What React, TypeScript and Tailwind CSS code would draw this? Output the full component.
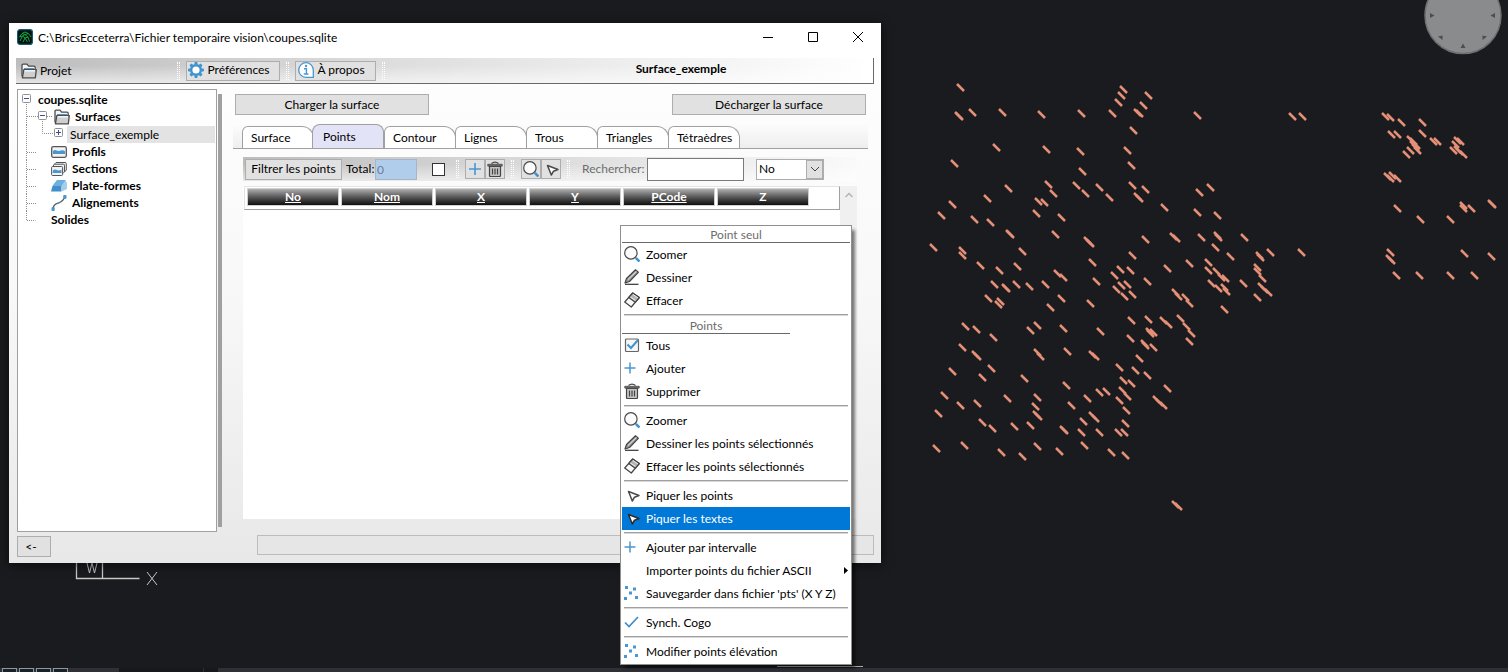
import type { ReactNode } from 'react';

const POINTS: number[][] = [
  [960, 87], [958, 115], [959, 116], [972, 112], [1002, 112], [1041, 114], [1081, 113], [996, 147], [1046, 149], [1080, 151],
  [954, 163], [1082, 171], [1008, 188], [1048, 184], [1053, 193], [1076, 185], [1085, 193], [1099, 187], [1109, 197],
  [987, 198], [1038, 201], [1044, 202], [1036, 213], [952, 204], [941, 215], [974, 219], [990, 222], [1061, 217],
  [1009, 233], [1010, 234], [1055, 234], [1087, 240], [1089, 242], [1090, 243], [933, 247], [962, 250], [962, 255], [1022, 251],
  [980, 265], [999, 270], [1017, 266], [1092, 262], [1057, 273], [1063, 277], [1096, 281], [994, 284], [1005, 287],
  [1006, 288], [1016, 284], [1029, 286], [1045, 284], [1061, 298], [988, 298], [1000, 301], [998, 304], [1050, 307],
  [1090, 303], [965, 326], [976, 329], [993, 337], [1030, 330], [1037, 325], [1063, 328], [1100, 331], [962, 347],
  [975, 354], [977, 356], [1037, 352], [1040, 356], [1067, 351], [1092, 354], [1095, 356], [991, 368], [952, 371], [982, 377],
  [1024, 378], [1066, 385], [944, 395], [1007, 398], [1037, 397], [1035, 406], [1036, 414], [1038, 416], [960, 405],
  [977, 403], [938, 413], [982, 422], [992, 428], [1014, 426], [1030, 425], [1063, 429], [1064, 430], [1071, 405],
  [1087, 398], [1099, 392], [1106, 391], [1092, 415], [1095, 418], [1083, 421], [1081, 432], [1099, 432], [936, 448],
  [964, 445], [1001, 452], [1022, 456], [1037, 446], [1059, 451], [1084, 445], [1123, 89], [1121, 95], [1118, 102],
  [1112, 113], [1148, 95], [1143, 105], [1137, 112], [1139, 113], [1133, 130], [1127, 150], [1131, 165], [1132, 185],
  [1145, 189], [1137, 196], [1139, 198], [1164, 207], [1199, 192], [1210, 187], [1197, 212], [1217, 215], [1197, 115],
  [1292, 116], [1302, 116], [1145, 239], [1173, 236], [1176, 238], [1201, 237], [1217, 235], [1218, 237], [1244, 237], [1215, 247],
  [1230, 256], [1259, 255], [1260, 257], [1270, 252], [1301, 252], [1132, 255], [1120, 269], [1130, 270], [1114, 275],
  [1167, 268], [1189, 263], [1208, 262], [1208, 270], [1216, 271], [1221, 277], [1225, 278], [1211, 283], [1218, 288],
  [1224, 287], [1226, 291], [1243, 283], [1257, 267], [1257, 271], [1262, 278], [1261, 286], [1264, 289], [1268, 292],
  [1257, 297], [1121, 285], [1127, 284], [1116, 289], [1124, 296], [1132, 294], [1147, 281], [1175, 292], [1178, 296],
  [1185, 297], [1189, 303], [1224, 309], [1131, 320], [1148, 319], [1163, 320], [1168, 324], [1180, 318], [1186, 326],
  [1191, 333], [1189, 341], [1149, 331], [1150, 333], [1153, 332], [1144, 343], [1145, 345], [1153, 347], [1130, 338],
  [1139, 358], [1119, 367], [1135, 370], [1147, 375], [1123, 380], [1131, 383], [1122, 390], [1127, 396], [1119, 400],
  [1126, 410], [1167, 388], [1156, 399], [1159, 402], [1163, 405], [1125, 423], [1118, 432], [1124, 432], [1111, 452],
  [1125, 455], [1175, 504], [1178, 506], [1385, 116], [1390, 117], [1401, 122], [1391, 134], [1397, 134], [1422, 122],
  [1422, 133], [1410, 139], [1413, 141], [1413, 144], [1416, 145], [1417, 150], [1415, 147], [1410, 150], [1406, 154],
  [1433, 141], [1437, 141], [1457, 140], [1460, 141], [1455, 144], [1453, 150], [1457, 149], [1459, 151], [1463, 154],
  [1387, 176], [1390, 178], [1392, 175], [1397, 178], [1397, 208], [1420, 219], [1450, 219], [1463, 205], [1463, 208],
  [1471, 208], [1491, 203], [1492, 204], [1390, 252], [1389, 258], [1391, 260], [1464, 253], [1491, 256], [1396, 275],
  [1419, 275], [1450, 275], [1474, 275],
];

/* ---------- icons ---------- */

function Ic({ children, className = 'h-4 w-4' }: { children: ReactNode; className?: string }) {
  return (
    <svg viewBox="0 0 16 16" className={`shrink-0 ${className}`} fill="none" aria-hidden="true">
      {children}
    </svg>
  );
}

const FolderIcon = () => (
  <Ic>
    <path d="M1 13.500V2.500Q1 1.200 2.200 1.200h3.800l1.600 2h5.400q1.200 0 1.200 1.200V7" fill="#f4f4f4" stroke="#4c4c4c" strokeWidth="1.300" />
    <path d="M3 5h10v2H3z" fill="#4a97cf" />
    <path d="M2.800 6.600h12.500l-1 8.200H1.400z" fill="#cfcfcf" stroke="#4c4c4c" strokeWidth="1.300" strokeLinejoin="round" />
    <path d="M3.600 7.800h10.400" stroke="#fff" strokeWidth="1.300" />
  </Ic>
);

const GearIcon = () => (
  <Ic>
    <circle cx="8" cy="8" r="4.800" fill="#fff" stroke="#3f93cf" strokeWidth="2.400" />
    {[0, 45, 90, 135, 180, 225, 270, 315].map((a) => (
      <path key={a} d="M6.200 2.600 6.800 .1h2.400l.6 2.500z" fill="#3f93cf" transform={`rotate(${a} 8 8)`} />
    ))}
  </Ic>
);

const InfoIcon = () => (
  <Ic>
    <path d="M8 .7a7.3 7.3 0 1 0 0 14.6h7.3V8A7.3 7.3 0 0 0 8 .7z" fill="#fff" stroke="#4a97cf" strokeWidth="1.3" />
    <circle cx="8" cy="4" r="1.2" fill="#4a97cf" />
    <path d="M6 6.800h2.400v5M5.800 12h4.600" stroke="#4a97cf" strokeWidth="1.4" />
  </Ic>
);

const ProfileIcon = () => (
  <Ic>
    <rect x=".7" y="2.700" width="14.600" height="10.600" rx="1.500" fill="#f2f2f2" stroke="#555" strokeWidth="1.300" />
    <path d="M2 7q1.500-1.500 3.500-.6T10 6.500t4 .7V10H2z" fill="#4a97cf" />
  </Ic>
);

const SectionIcon = () => (
  <Ic>
    <path d="M4 4.500V2.500l1-1h9q1.300 0 1.300 1.300V9l-1.800 2" fill="#f2f2f2" stroke="#555" />
    <path d="M2.500 6V4l.8-.8h9.200q1 0 1 1V11l-1.300 1" fill="#f2f2f2" stroke="#555" />
    <rect x=".6" y="5.500" width="11" height="9" rx="1" fill="#f2f2f2" stroke="#555" />
    <path d="M1.800 9.500q2-1.500 4-.5t4.700-.3v3.300H1.800z" fill="#4a97cf" />
  </Ic>
);

const PlatformIcon = () => (
  <Ic>
    <path d="M0 13.500 1.500 8 6 2.300h8.500L10.500 8v5.500z" fill="#3f8fca" />
    <path d="M1.800 8 6 2.300h8.500L10.500 8z" fill="#6bb0e0" />
    <path d="M10.500 13.500V8l4-5.700L16 5v6z" fill="#a4cdea" />
  </Ic>
);

const AlignIcon = () => (
  <Ic>
    <path d="M2 14.500C2 8 7 8.500 8 7.800 12 6 13.500 4 14 1" stroke="#555" strokeWidth="1.300" />
    <path d="M1 12.500h2.200v3H1zM12.800.3H15v3h-2.200zM6.300 8.800l4-2.300" fill="#4a97cf" stroke="#4a97cf" strokeWidth="1" />
  </Ic>
);

const SearchIcon = () => (
  <Ic>
    <circle cx="6.900" cy="6.900" r="6.200" fill="#fbfbfb" stroke="#4a4a4a" strokeWidth="1.200" />
    <path d="m11.800 11.800 3.700 3.700" stroke="#3f93cf" strokeWidth="2.600" />
  </Ic>
);

const PencilIcon = () => (
  <Ic>
    <path d="M1 14 2.500 9.500 11.500.8l2.800 2.500L5.500 12.500z" fill="#9a9a9a" stroke="#444" strokeWidth="1.200" strokeLinejoin="round" />
    <path d="M4 10.500 12.500 2.300" stroke="#eee" />
    <path d="M1 15.300h13.500" stroke="#333" strokeWidth="1.200" />
  </Ic>
);

const EraserIcon = () => (
  <Ic>
    <path d="M.7 10 8.700 1l6.600 4.500-8 9.500z" fill="#fafafa" stroke="#444" strokeWidth="1.200" strokeLinejoin="round" />
    <path d="M4.700 5.500 8.700 1l6.600 4.500-4 4.700z" fill="#b4b4b4" stroke="#444" strokeWidth="1.200" strokeLinejoin="round" />
    <path d="m6.500 5 5 3.600M9 2.500l5 3.500" stroke="#ececec" />
  </Ic>
);

const CheckBoxIcon = () => (
  <Ic>
    <rect x="1.500" y="2" width="13" height="12.500" rx="1" fill="#f6f6f6" stroke="#666" strokeWidth="1.200" />
    <path d="M3.500 7.500 7 11l7-8" stroke="#3f93cf" strokeWidth="2" />
  </Ic>
);

const PlusIcon = () => (
  <Ic>
    <path d="M6 2.500v11M.5 8h11" stroke="#4a97cf" strokeWidth="1.500" />
  </Ic>
);

const PlusCenteredIcon = () => (
  <Ic>
    <path d="M8 2v12M2 8h12" stroke="#4a97cf" strokeWidth="1.600" />
  </Ic>
);

const TrashIcon = () => (
  <Ic>
    <path d="M2.500 5.500h11v9q0 1-1 1h-9q-1 0-1-1z" fill="#c4c4c4" stroke="#444" strokeWidth="1.200" />
    <path d="M.8 3.300h14.400v1.800H.8z" fill="#777" stroke="#444" strokeWidth=".8" />
    <path d="M4.500 2.500Q8-.3 11.500 2.500" stroke="#444" strokeWidth="1.400" />
    <path d="M5.500 7.500v6M8 7.500v6M10.500 7.500v6" stroke="#444" strokeWidth="1.200" />
  </Ic>
);

const CursorIcon = ({ dark = false }: { dark?: boolean }) => (
  <Ic>
    <path d="M4.500 4.500 15 8.500l-4.500 1.700L8.300 14z" fill="#fff" stroke={dark ? '#2b2b2b' : '#4a4a4a'} strokeWidth="1.500" strokeLinejoin="round" />
  </Ic>
);

const DotsIcon = () => (
  <Ic>
    <path d="M1 1h3v3H1zM9 2.500h3v3H9zM5 6.500h3v3H5zM0 12h3v3H0zM11 11h3v3h-3z" fill="#4a97cf" />
  </Ic>
);

const CheckIcon = () => (
  <Ic>
    <path d="M1 8.500 5 12.500 14 3" stroke="#3f8cc9" strokeWidth="1.700" />
  </Ic>
);

const AppIcon = () => (
  <Ic>
    <rect x=".6" y=".6" width="14.800" height="14.800" rx="2.500" fill="#04120c" stroke="#1b5878" strokeWidth="1.200" />
    <path d="M2.500 8 5 4.500 8 3l3.500 1.500L14 8M3 12l2.500-5L8 5.500 11 8l1.500 4.500M5.500 7 8 9l3-1M6 13l2-4 2.500 4M2.500 8l3-1M5 4.500l3 1 3.500-1" stroke="#17a046" strokeWidth="1" />
  </Ic>
);

/* ---------- small building blocks ---------- */

const Grip = () => <span className="h-[18px] w-[3px] shrink-0 border-x border-dotted border-white" />;

function FlatButton({ children, className = '' }: { children: ReactNode; className?: string }) {
  return (
    <button type="button" className={`flex shrink-0 items-center justify-center border border-[#adadad] bg-[#e1e1e1] ${className}`}>
      {children}
    </button>
  );
}

/* ---------- drawing area behind the window ---------- */

function DrawingCanvas() {
  return (
    <svg className="absolute inset-0 h-full w-full" aria-hidden="true">
      <g stroke="#e58f78" strokeWidth="2.500">
        {POINTS.map(([x, y], i) => (
          <path key={i} d={`M${x - 3} ${y - 3}l7 7`} />
        ))}
      </g>
      <circle cx="1463" cy="15.500" r="38" fill="#8a8b8c" stroke="#6f7072" strokeWidth="1.500" />
      <g fill="#4c4d4f">
        <path d="M1430 13v5l4.500-2.500zM1495 13v5l-4.500-2.500zM1460.500 48h5l-2.500-4.500zM1438 36.500l4.500-1v4.500zM1487 36.500l-4.500-1v4.500z" />
      </g>
      <g stroke="#c8c8c8" fill="none">
        <path d="M76.500 560v18.500h63M102.500 560v18" strokeWidth="1.300" />
        <path d="m147 572 10 13m0-13-10 13" />
        <path d="m86.500 561 3 12 2.500-10 2.500 10 3-12" />
      </g>
      <path d="M777 666.500h86" stroke="#a9aba6" />
    </svg>
  );
}

function StatusStrip() {
  return (
    <div className="relative flex h-1 w-full bg-[#2f3036]">
      {[0, 1, 2, 3].map((n) => (
        <span key={n} className="ml-[2px] h-1 w-[15px] border-x border-t border-[#8b97a3] bg-[#1b2026]" />
      ))}
      <span className="ml-[51px] h-1 w-[84px] bg-[#17181c]" />
      <span className="ml-px h-1 w-[14px] bg-[#17181c]" />
    </div>
  );
}

/* ---------- tree ---------- */

type Node = { label: string; lines: string; width: number; boxes?: [number, boolean][]; icon?: ReactNode; bold?: boolean; selected?: boolean };

const TREE: Node[] = [
  { label: 'coupes.sqlite', lines: 'M8.500 9v9', width: 20, boxes: [[4, false]], bold: true },
  { label: 'Surfaces', lines: 'M8.500 0v18M9 8.500h11M24.500 9v9M29 8.500h6', width: 36, boxes: [[20, false]], icon: <FolderIcon />, bold: true },
  { label: 'Surface_exemple', lines: 'M8.500 0v18M24.500 0v8.500h12', width: 49, boxes: [[36, true]], selected: true },
  { label: 'Profils', lines: 'M8.500 0v18M9 9.500h9', width: 33, icon: <ProfileIcon />, bold: true },
  { label: 'Sections', lines: 'M8.500 0v18M9 9.500h9', width: 33, icon: <SectionIcon />, bold: true },
  { label: 'Plate-formes', lines: 'M8.500 0v18M9 9.500h9', width: 33, icon: <PlatformIcon />, bold: true },
  { label: 'Alignements', lines: 'M8.500 0v18M9 9.500h9', width: 33, icon: <AlignIcon />, bold: true },
  { label: 'Solides', lines: 'M8.500 0v9.500h9', width: 33, bold: true },
];

function Tree() {
  return (
    <ul className="w-[200px] shrink-0 border border-[#a0a0a0] bg-white pt-px pr-px">
      {TREE.map((n) => (
        <li key={n.label} className={n.selected ? 'flex h-[18px] items-end' : 'flex h-[17px] items-center'}>
          <svg style={{ width: n.width }} className="h-full shrink-0 self-stretch" aria-hidden="true">
            <path d={n.lines} stroke="#909090" strokeDasharray="1 1" fill="none" />
            {n.boxes?.map(([x, plus]) => (
              <g key={x}>
                <rect x={x + 0.5} y="3.500" width="8" height="8" rx="1" fill="#fdfdfd" stroke="#919191" />
                <path d={plus ? `M${x + 2} 7.500h5M${x + 4.5} 5v5` : `M${x + 2} 7.500h5`} stroke="#3a4f9a" />
              </g>
            ))}
          </svg>
          {n.icon}
          <span
            className={
              n.selected
                ? 'flex h-[17px] flex-1 items-center bg-[#e3e3e3] pl-[3px]'
                : n.bold && n.icon
                  ? 'pl-[5px] font-bold'
                  : 'font-bold'
            }
          >
            {n.label}
          </span>
        </li>
      ))}
    </ul>
  );
}

/* ---------- surface panel ---------- */

const TABS = ['Surface', 'Points', 'Contour', 'Lignes', 'Trous', 'Triangles', 'Tétraèdres'];
const COLUMNS = ['No', 'Nom', 'X', 'Y', 'PCode', 'Z'];

function Tabs() {
  return (
    <div role="tablist" className="mt-[9px] flex h-[25px] items-end border-b border-[#a0a0a0] bg-linear-to-b from-transparent to-[#eeeeee] pl-[9px]">
      {TABS.map((t) =>
        t === 'Points' ? (
          <button key={t} role="tab" aria-selected="true" type="button" className="-ml-px h-6 w-[72px] shrink-0 rounded-t-lg border border-b-0 border-[#a0a0a0] bg-[#e3e3f7] pl-[10px] text-left">
            {t}
          </button>
        ) : (
          <button key={t} role="tab" aria-selected="false" type="button" className="-mr-px h-[22px] w-[72px] shrink-0 rounded-tl-md rounded-tr-xl border border-b-0 border-[#a0a0a0] bg-white pl-2 text-left">
            {t}
          </button>
        ),
      )}
    </div>
  );
}

function FilterBar() {
  return (
    <div className="flex h-6 items-center bg-[linear-gradient(to_bottom,transparent_30%,rgba(255,255,255,0.600)),linear-gradient(to_right,#bdbdbd,#fafafa)] pl-[2px]">
      <FlatButton className="h-[21px] w-[97px]">Filtrer les points</FlatButton>
      <label htmlFor="total" className="w-[33px] shrink-0 pl-1">Total:</label>
      <input id="total" readOnly value="0" className="h-[21px] w-[42px] shrink-0 border border-[#a5b6c9] bg-[#b1cdec] pl-px text-[#6d7f93]" />
      <input type="checkbox" aria-label="Tous les points" className="mr-[11px] ml-[15px] h-[13px] w-[13px] shrink-0 appearance-none border border-[#333] bg-white" />
      <Grip />
      <FlatButton className="ml-[6px] h-5 w-5"><PlusCenteredIcon /></FlatButton>
      <FlatButton className="mr-[6px] h-5 w-5"><TrashIcon /></FlatButton>
      <Grip />
      <FlatButton className="ml-[7px] h-5 w-5"><SearchIcon /></FlatButton>
      <FlatButton className="mr-[6px] h-5 w-5"><CursorIcon /></FlatButton>
      <Grip />
      <label htmlFor="search" className="w-[77px] shrink-0 pl-3 text-[#6d6d6d]">Rechercher:</label>
      <input id="search" className="h-[23px] w-[97px] shrink-0 border border-[#7a7a7a] bg-white px-1" />
      <div className="relative ml-3 h-[21px] w-[68px] shrink-0 border border-[#adadad] bg-white">
        <select aria-label="Champ de recherche" className="h-full w-full appearance-none bg-transparent pl-[2px] leading-none">
          <option>No</option>
        </select>
        <span className="pointer-events-none absolute top-0 right-0 flex h-full w-[17px] items-center justify-center border border-[#adadad] bg-[#e1e1e1]">
          <svg viewBox="0 0 10 6" className="h-[6px] w-[10px]" fill="none" aria-hidden="true"><path d="m1 1 4 4 4-4" stroke="#444" /></svg>
        </span>
      </div>
    </div>
  );
}

function PointsPage() {
  return (
    <div className="flex flex-1 flex-col pt-2 pr-[11px] pb-[13px] pl-[10px]">
      <FilterBar />
      <div className="mt-[5px] flex flex-1 bg-white">
        <div className="flex-1">
          <div className="ml-px h-6 border border-[#a0a0a0] border-t-[#e3e3e3] border-l-[#e3e3e3] pt-px pl-px">
            <table className="w-[564px] table-fixed border-collapse">
              <thead>
                <tr>
                  {COLUMNS.map((c) => (
                    <th key={c} className="p-0 px-px">
                      <div className={`h-[18px] border border-[#d0d0d0] bg-linear-to-b from-[#b0b0b0] via-[#585858] to-[#101010] leading-4 font-bold text-white ${c === 'Z' ? '' : 'underline'}`}>{c}</div>
                    </th>
                  ))}
                </tr>
              </thead>
            </table>
          </div>
        </div>
        <div className="flex w-[17px] justify-center bg-[#f0f0f0] pt-[6px]">
          <svg viewBox="0 0 10 6" className="h-[6px] w-[10px]" fill="none" aria-hidden="true"><path d="m1.500 5 3.500-3.500L8.500 5" stroke="#b5b5b5" strokeWidth="1.500" /></svg>
        </div>
      </div>
    </div>
  );
}

/* ---------- main window ---------- */

function AppWindow() {
  return (
    <section className="absolute top-[23px] left-[9px] flex min-h-[540px] w-[872px] flex-col bg-linear-to-b from-white via-[#f8f8f8] to-[#e8e8e8] shadow-[0_2px_10px_rgba(0,0,0,0.600)]">
      <header className="flex h-[35px] items-start bg-white pt-[6px] pl-2">
        <AppIcon />
        <h1 className="pl-[5px] leading-[17px]">C:\BricsEcceterra\Fichier temporaire vision\coupes.sqlite</h1>
        <div className="ml-auto flex pr-[1px]">
          <button type="button" aria-label="Réduire" className="flex h-4 w-[45px] items-center justify-center">
            <svg viewBox="0 0 10 10" className="h-[10px] w-[10px]"><path d="M0 5.500h10" stroke="#000" /></svg>
          </button>
          <button type="button" aria-label="Agrandir" className="flex h-4 w-[45px] items-center justify-center">
            <svg viewBox="0 0 10 10" className="h-[10px] w-[10px]" fill="none"><path d="M.5.500h9v9h-9z" stroke="#000" /></svg>
          </button>
          <button type="button" aria-label="Fermer" className="flex h-4 w-[45px] items-center justify-center">
            <svg viewBox="0 0 10 10" className="h-[10px] w-[10px]"><path d="m0 0 10 10M10 0 0 10" stroke="#000" /></svg>
          </button>
        </div>
      </header>

      <nav className="mr-[7px] ml-[7px] flex h-[26px] items-center border-r border-b border-[#696969] bg-[linear-gradient(to_bottom,transparent_30%,rgba(255,255,255,0.600)),linear-gradient(to_right,#bdbdbd,#dedede_45%,#ffffff)] pl-[5px]">
        <button type="button" className="flex w-[156px] items-center gap-[3px]">
          <FolderIcon />
          Projet
        </button>
        <Grip />
        <FlatButton className="ml-[6px] h-5 w-[94px] gap-[3px] pr-[8px] pb-px"><GearIcon />Préférences</FlatButton>
        <span className="w-[6px]" />
        <Grip />
        <FlatButton className="ml-[6px] h-5 w-[81px] gap-[3px] pr-[8px] pb-px"><InfoIcon />À propos</FlatButton>
        <span className="w-[6px]" />
        <Grip />
        <strong className="flex-1 pr-1 pb-[3px] pl-[108px] text-center font-bold">Surface_exemple</strong>
      </nav>

      <div className="mt-[5px] flex flex-1 pr-[7px] pl-2">
        <Tree />
        <div className="my-[5px] ml-px w-1 shrink-0 bg-[#a0a0a0]" />
        <main className="flex flex-1 flex-col pt-[5px] pr-[6px] pl-[11px]">
          <div className="flex justify-between px-[2px]">
            <FlatButton className="h-[21px] w-[194px]">Charger la surface</FlatButton>
            <FlatButton className="h-[21px] w-[194px]">Décharger la surface</FlatButton>
          </div>
          <Tabs />
          <PointsPage />
        </main>
      </div>

      <footer className="flex h-[31px] items-start pt-[3px] pr-[7px] pl-2">
        <FlatButton className="mt-px h-[21px] w-[34px] pr-[6px]">&lt;-</FlatButton>
        <div className="ml-[206px] h-5 flex-1 border border-[#bcbcbc] bg-[#e6e6e6]" />
      </footer>
    </section>
  );
}

/* ---------- context menu ---------- */

const MenuSeparator = () => (
  <div role="separator" className="mx-[2px] h-[6px] pt-[2px]">
    <div className="h-[2px] border-t border-b border-t-[#a0a0a0] border-b-[#d8d8d8]" />
  </div>
);

function MenuItem({ icon, children, active = false, submenu = false }: { icon?: ReactNode; children: ReactNode; active?: boolean; submenu?: boolean }) {
  return (
    <button
      type="button"
      role="menuitem"
      className={`flex h-[23px] w-full items-center pl-[2px] text-left ${active ? 'bg-[#0078d7] text-white' : 'text-black'}`}
    >
      <span className="mr-[6px] flex w-4 pb-px">{icon}</span>
      <span className="whitespace-nowrap">{children}</span>
      {submenu && (
        <svg viewBox="0 0 4 7" className="mr-[2px] ml-auto h-[7px] w-1 shrink-0" aria-hidden="true"><path d="M0 0v7l4-3.500z" fill="#000" /></svg>
      )}
    </button>
  );
}

function ContextMenu() {
  return (
    <div role="menu" className="absolute top-[225px] left-[620px] w-[232px] border border-[#8f8f8f] bg-white px-px pb-px shadow-[4px_4px_3px_-1px_rgba(0,0,0,0.500)]">
      <div className="h-[17px] border-b border-[#696969] text-center leading-[18px] text-[#6d6d6d]">Point seul</div>
      <MenuItem icon={<SearchIcon />}>Zoomer</MenuItem>
      <MenuItem icon={<PencilIcon />}>Dessiner</MenuItem>
      <MenuItem icon={<EraserIcon />}>Effacer</MenuItem>
      <MenuSeparator />
      <div className="h-4 w-[168px] border-b border-[#696969] text-center leading-4 text-[#6d6d6d]">Points</div>
      <MenuItem icon={<CheckBoxIcon />}>Tous</MenuItem>
      <MenuItem icon={<PlusIcon />}>Ajouter</MenuItem>
      <MenuItem icon={<TrashIcon />}>Supprimer</MenuItem>
      <MenuSeparator />
      <MenuItem icon={<SearchIcon />}>Zoomer</MenuItem>
      <MenuItem icon={<PencilIcon />}>Dessiner les points sélectionnés</MenuItem>
      <MenuItem icon={<EraserIcon />}>Effacer les points sélectionnés</MenuItem>
      <MenuSeparator />
      <MenuItem icon={<CursorIcon />}>Piquer les points</MenuItem>
      <MenuItem icon={<CursorIcon dark />} active>Piquer les textes</MenuItem>
      <MenuSeparator />
      <MenuItem icon={<PlusIcon />}>Ajouter par intervalle</MenuItem>
      <MenuItem submenu>Importer points du fichier ASCII</MenuItem>
      <MenuItem icon={<DotsIcon />}>Sauvegarder dans fichier 'pts' (X Y Z)</MenuItem>
      <MenuSeparator />
      <MenuItem icon={<CheckIcon />}>Synch. Cogo</MenuItem>
      <MenuSeparator />
      <MenuItem icon={<DotsIcon />}>Modifier points élévation</MenuItem>
    </div>
  );
}

export default function App() {
  return (
    <div className="relative flex min-h-screen flex-col justify-end overflow-hidden bg-[#1a1b1e] font-['Lato','Open_Sans',sans-serif] text-[12px] leading-4 whitespace-nowrap text-black">
      <DrawingCanvas />
      <StatusStrip />
      <AppWindow />
      <ContextMenu />
    </div>
  );
}
